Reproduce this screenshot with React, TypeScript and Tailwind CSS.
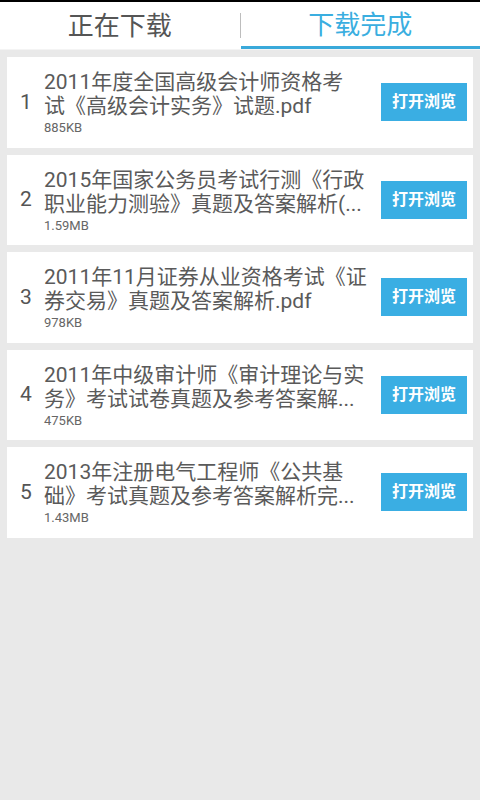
import React from "react";

const items = [
  { n: 1, l1: "2011年度全国高级会计师资格考", l2: "试《高级会计实务》试题.pdf", size: "885KB" },
  { n: 2, l1: "2015年国家公务员考试行测《行政", l2: "职业能力测验》真题及答案解析(...", size: "1.59MB" },
  { n: 3, l1: "2011年11月证券从业资格考试《证", l2: "券交易》真题及答案解析.pdf", size: "978KB" },
  { n: 4, l1: "2011年中级审计师《审计理论与实", l2: "务》考试试卷真题及参考答案解...", size: "475KB" },
  { n: 5, l1: "2013年注册电气工程师《公共基", l2: "础》考试真题及参考答案解析完...", size: "1.43MB" },
];

const font = { fontFamily: 'Roboto, "Noto Sans CJK SC", sans-serif' };

export default function App() {
  return (
    <div className="w-[480px] h-[800px] bg-[#e9e9e9] flex flex-col" style={font}>
      <div className="h-[2px] bg-black" />
      <div className="h-[47px] bg-white flex relative">
        <div className="flex-1 flex items-center justify-center text-[26px] text-[#555555] pt-[1px]">正在下载</div>
        <div className="w-px bg-[#bdbdbd] my-[11px]" />
        <div className="flex-1 flex flex-col">
          <div className="flex-1 flex items-center justify-center text-[26px] text-[#3aaee0] pt-[3px]">下载完成</div>
          <div className="h-[3px] bg-[#3aa9da]" />
        </div>
      </div>
      <div className="h-[1px] bg-[#f4f4f4]" />
      <div className="flex flex-col gap-[7px] px-[7px] pt-[7px]">
        {items.map((it) => (
          <div key={it.n} className="h-[90.5px] bg-white flex items-center">
            <div className="w-[37px] pl-[13px] text-[21px] text-[#555555]">{it.n}</div>
            <div className="flex-1 flex flex-col pt-[2px]">
              <div className="text-[21px] leading-[24px] text-[#5a5a5a] whitespace-nowrap">{it.l1}</div>
              <div className="text-[21px] leading-[24px] text-[#5a5a5a] whitespace-nowrap">{it.l2}</div>
              <div className="text-[13px] leading-[16px] text-[#666666] mt-[2px]">{it.size}</div>
            </div>
            <div className="w-[86px] h-[38px] bg-[#3aaee3] mr-[6px] flex items-center justify-center text-white text-[16px] font-semibold">
              打开浏览
            </div>
          </div>
        ))}
      </div>
    </div>
  );
}
